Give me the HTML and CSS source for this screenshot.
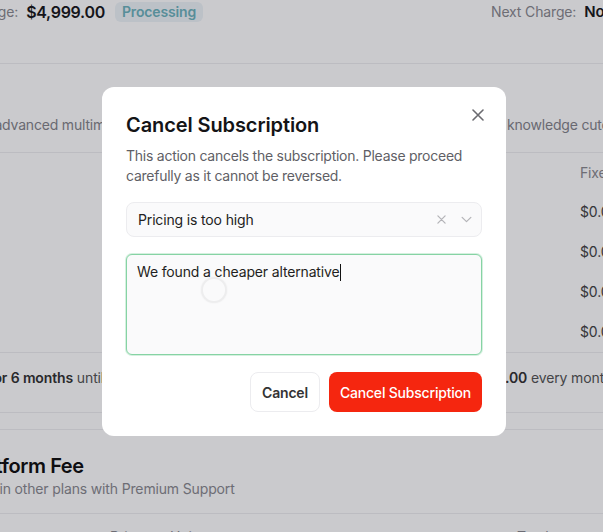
FILE: index.html
```html
<!DOCTYPE html>
<html lang="en">
<head>
<meta charset="utf-8">
<title>Cancel Subscription</title>
<link rel="stylesheet" href="styles.css">
</head>
<body>
<div class="page">
  <div class="summary">
    <div class="summary-left">
      <span class="label">Charge:</span>
      <span class="amount">$4,999.00</span>
      <span class="badge">Processing</span>
    </div>
    <div class="summary-right">
      <span class="label">Next Charge:</span>
      <span class="amount-sm">Not scheduled</span>
    </div>
  </div>

  <section class="plan">
    <p class="plan-desc">Our advanced multimodal model with extended context, faster output and the latest knowledge cutoff</p>
    <div class="rates">
      <div class="rate-row rate-head"><span></span><span>Fixed</span></div>
      <div class="rate-row"><span></span><span>$0.00</span></div>
      <div class="rate-row"><span></span><span>$0.00</span></div>
      <div class="rate-row"><span></span><span>$0.00</span></div>
      <div class="rate-row"><span></span><span>$0.00</span></div>
    </div>
    <p class="plan-foot"><strong>$0 for 6 months</strong> until March 1, 2025. After the promotion ends, you will pay <strong>$4,999.00</strong> every month</p>
  </section>

  <section class="fee">
    <h2 class="fee-title">Platform Fee</h2>
    <p class="fee-desc">Free in other plans with Premium Support</p>
    <div class="fee-head"><span></span><span>Price</span><span>Unit</span><span></span><span>Total</span></div>
  </section>
</div>

<div class="overlay">
  <div class="modal" role="dialog" aria-label="Cancel Subscription">
    <button class="close" aria-label="Close">
      <svg viewBox="0 0 12 12" width="12" height="12"><path d="M1 1L11 11M11 1L1 11" stroke="#6b6b70" stroke-width="1.6" stroke-linecap="round"/></svg>
    </button>
    <h1 class="modal-title">Cancel Subscription</h1>
    <p class="modal-text">This action cancels the subscription. Please proceed carefully as it cannot be reversed.</p>
    <div class="select">
      <span class="select-value">Pricing is too high</span>
      <span class="select-icons">
        <svg viewBox="0 0 10 10" width="9" height="9"><path d="M1 1L9 9M9 1L1 9" stroke="#b4b4b8" stroke-width="1.4" stroke-linecap="round"/></svg>
        <svg viewBox="0 0 12 8" width="11" height="7"><path d="M1 1.5L6 6.5L11 1.5" fill="none" stroke="#b4b4b8" stroke-width="1.4" stroke-linecap="round" stroke-linejoin="round"/></svg>
      </span>
    </div>
    <div class="textarea">
      <span>We found a cheaper alternative</span><span class="caret"></span>
      <span class="touch"></span>
    </div>
    <div class="actions">
      <button class="btn btn-light">Cancel</button>
      <button class="btn btn-danger">Cancel Subscription</button>
    </div>
  </div>
</div>
</body>
</html>
```
FILE: styles.css
```css
html, body {
  margin: 0;
  padding: 0;
  overflow: hidden;
  background: #ffffff;
}
body {
  font-family: Inter, "Noto Sans", "Liberation Sans", sans-serif;
  color: #222;
  width: 603px;
  height: 532px;
  letter-spacing: -0.15px;
}
p, h1, h2 { margin: 0; }

.page {
  margin-left: -33px;
  width: 760px;
  font-size: 14px;
  line-height: 20px;
}

.summary {
  display: grid;
  grid-template-columns: 524px 1fr;
  align-items: center;
  height: 24px;
  margin-bottom: 39px;
}
.summary-left, .summary-right {
  display: flex;
  align-items: center;
  gap: 8px;
}
.label { color: #8a8a90; font-size: 14px; }
.amount { font-size: 16px; font-weight: 600; color: #1a1a1d; letter-spacing: -0.3px; }
.amount-sm { font-size: 15px; font-weight: 600; color: #1a1a1d; }
.badge {
  background: #eef4f8;
  color: #6eb3bd;
  font-weight: 600;
  font-size: 14px;
  padding: 0 7px;
  line-height: 20px;
  border-radius: 6px;
  margin-left: 2px;
}

.plan {
  border-top: 1px solid #eeeef0;
  border-bottom: 1px solid #eeeef0;
}
.plan-desc {
  padding: 51px 0 17px;
  color: #85858b;
  white-space: nowrap;
  letter-spacing: -0.19px;
  border-bottom: 1px solid #eeeef0;
}
.rates { border-bottom: 1px solid #eeeef0; }
.rate-row {
  display: grid;
  grid-template-columns: 613px 1fr;
  height: 40px;
  align-items: center;
  color: #444;
}
.rate-head { height: 39px; color: #8a8a90; }
.plan-foot {
  padding: 15px 0 24px;
  color: #555;
  white-space: nowrap;
  letter-spacing: -0.13px;
}
.plan-foot strong { color: #333; font-weight: 600; }

.fee {
  margin-top: 16px;
  border-top: 1px solid #eeeef0;
}
.fee-title {
  padding-top: 24px;
  font-size: 20px;
  line-height: 24px;
  font-weight: 600;
  letter-spacing: -0.4px;
  color: #111;
}
.fee-desc {
  margin-top: 1px;
  padding-bottom: 14px;
  color: #8a8a90;
  border-bottom: 1px solid #eeeef0;
}
.fee-head {
  display: grid;
  grid-template-columns: 143px 60px 60px 287px 1fr;
  padding-top: 13px;
  color: #8a8a90;
}

.overlay {
  position: fixed;
  inset: 0;
  background: rgba(7, 3, 17, 0.21);
  padding: 87px 0 0 102px;
}
.modal {
  position: relative;
  box-sizing: border-box;
  width: 404px;
  height: 349px;
  background: #fff;
  border-radius: 12px;
  padding: 24px;
  display: flex;
  flex-direction: column;
}
.close {
  position: absolute;
  top: 21px;
  right: 21px;
  width: 14px;
  height: 14px;
  padding: 1px;
  border: 0;
  background: none;
  display: flex;
}
.modal-title {
  font-size: 20px;
  line-height: 28px;
  font-weight: 600;
  letter-spacing: -0.1px;
  color: #141416;
}
.modal-text {
  margin-top: 7px;
  font-size: 14px;
  line-height: 20px;
  letter-spacing: -0.25px;
  color: #5f5f66;
}
.select {
  margin-top: 16px;
  height: 35px;
  box-sizing: border-box;
  border: 1px solid #ececef;
  border-radius: 8px;
  background: #fafafb;
  display: flex;
  align-items: center;
  justify-content: space-between;
  padding: 0 9px 0 11px;
  font-size: 14px;
  color: #222;
}
.select-icons {
  display: flex;
  align-items: center;
  gap: 15px;
}
.textarea {
  position: relative;
  margin-top: 17px;
  height: 101px;
  box-sizing: border-box;
  border: 1.5px solid #86d3a4;
  box-shadow: 0 0 0 1px rgba(134, 211, 164, 0.35);
  border-radius: 6px;
  background: #fafafb;
  padding: 8px 10px;
  font-size: 14px;
  line-height: 18px;
  color: #1f1f22;
}
.caret {
  display: inline-block;
  width: 1px;
  height: 17px;
  background: #111;
  vertical-align: -4px;
}
.touch {
  position: absolute;
  left: 74px;
  top: 22px;
  width: 22px;
  height: 22px;
  border-radius: 50%;
  border: 2px solid rgba(0, 0, 0, 0.05);
  box-shadow: 0 0 2px rgba(0, 0, 0, 0.06);
}
.actions {
  margin-top: 17px;
  display: flex;
  justify-content: flex-end;
  gap: 9px;
}
.btn {
  height: 40px;
  border-radius: 8px;
  font-family: inherit;
  font-size: 14px;
  padding: 0;
  white-space: nowrap;
  letter-spacing: -0.2px;
}
.btn-light {
  width: 70px;
  background: #fff;
  border: 1px solid #ececef;
  color: #333;
  font-weight: 600;
}
.btn-danger {
  width: 153px;
  background: #f5260f;
  border: 0;
  color: #fff;
  font-weight: 500;
}
```
